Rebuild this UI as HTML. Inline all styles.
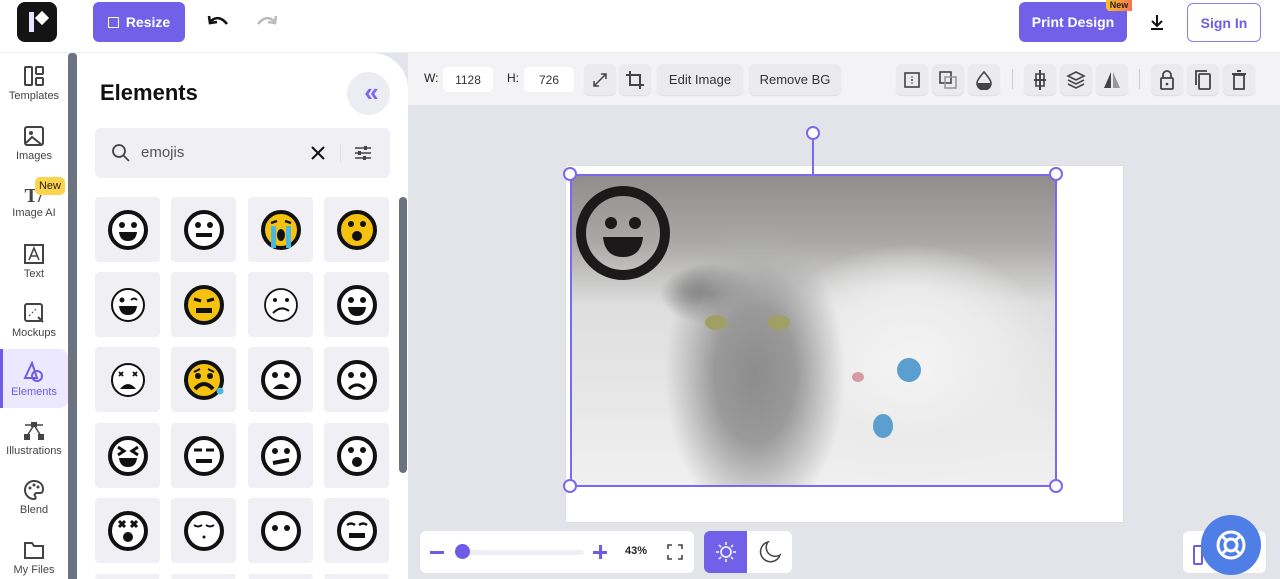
<!DOCTYPE html>
<html style="width:1280px;height:579px;overflow:hidden"><head><meta charset="utf-8">
<style>
*{box-sizing:border-box;margin:0;padding:0}
body{width:1280px;height:579px;overflow:hidden;font-family:"Liberation Sans",sans-serif;background:#e3e4e9;position:relative}
.abs{position:absolute}
.top{left:0;top:0;width:1280px;height:53px;background:#fff;border-bottom:1px solid #eceef2}
.logo{left:17px;top:2px;width:40px;height:40px;background:#141414;border-radius:8px}
.btnp{background:#7360e8;color:#fff;border-radius:6px;font-weight:bold;font-size:14px;display:flex;align-items:center;justify-content:center}
.side{left:0;top:53px;width:68px;height:526px;background:#fff}
.sb{left:68px;top:53px;width:9px;height:526px;background:#6b7280;border-radius:4px 4px 0 0}
.panel{left:77px;top:53px;width:331px;height:526px;background:#fff;border-radius:0 36px 0 0}
.nav{position:absolute;left:0;width:68px;text-align:center;font-size:11px;color:#444}
.nav svg{display:block;margin:0 auto 3px}
.cell{position:absolute;width:65px;height:65px;background:#f0f0f4;border-radius:4px;display:flex;align-items:center;justify-content:center}
.tb{left:408px;top:53px;width:872px;height:52px;background:#f3f3f6}
.tbtn{position:absolute;top:11px;height:31px;background:#ebebef;border-radius:6px;font-size:13px;color:#333;display:flex;align-items:center;justify-content:center;box-shadow:0 1px 1px #ddd}
.inp{position:absolute;top:14px;height:25px;background:#fff;border-radius:5px;font-size:12px;color:#333;display:flex;align-items:center;justify-content:center}
.h{position:absolute;width:14px;height:14px;border:2px solid #7b68ee;background:#fff;border-radius:50%}
</style></head><body>
<div class="abs top"></div>
<div class="abs logo"><div class="abs" style="left:12px;top:10px;width:5px;height:20px;background:#e8e4ff"></div><div class="abs" style="left:20px;top:11px;width:10px;height:10px;background:#fff;transform:rotate(45deg)"></div></div>
<div class="abs btnp" style="left:93px;top:2px;width:92px;height:40px"><span style="display:inline-block;width:11px;height:11px;border:1.5px solid #fff;margin-right:7px;border-radius:1px"></span>Resize</div>
<svg class="abs" style="left:207px;top:12px" width="24" height="20" viewBox="0 0 24 20"><path d="M4 9 Q12 2 20 12" stroke="#111" stroke-width="2.6" fill="none"/><path d="M2 4 L3 11 L10 10" stroke="#111" stroke-width="2.6" fill="none"/></svg>
<svg class="abs" style="left:254px;top:12px" width="24" height="20" viewBox="0 0 24 20"><path d="M20 9 Q12 2 4 12" stroke="#bbb" stroke-width="2.6" fill="none"/><path d="M22 4 L21 11 L14 10" stroke="#bbb" stroke-width="2.6" fill="none"/></svg>
<div class="abs btnp" style="left:1019px;top:2px;width:108px;height:40px">Print Design</div>
<div class="abs" style="left:1106px;top:0;width:26px;height:11px;background:linear-gradient(90deg,#fbbf24,#f97352);border-radius:0 0 0 4px;font-size:9px;font-weight:bold;text-align:center;color:#222;line-height:10px">New</div>
<svg class="abs" style="left:1149px;top:13px" width="16" height="18"><path d="M8 2v10M3 8l5 5 5-5M2 16h12" stroke="#111" stroke-width="2" fill="none"/></svg>
<div class="abs" style="left:1187px;top:3px;width:74px;height:39px;border:1.5px solid #8b7cf0;border-radius:6px;color:#6c5ce7;font-size:14px;font-weight:bold;display:flex;align-items:center;justify-content:center">Sign In</div>

<div class="abs side">
<div class="nav" style="top:12px"><svg width="22" height="22"><rect x="2" y="2" width="7" height="18" rx="1" fill="none" stroke="#444" stroke-width="2"/><rect x="13" y="2" width="7" height="7" rx="1" fill="none" stroke="#444" stroke-width="2"/><rect x="13" y="13" width="7" height="7" rx="1" fill="none" stroke="#444" stroke-width="2"/></svg>Templates</div>
<div class="nav" style="top:72px"><svg width="22" height="22"><rect x="2" y="2" width="18" height="18" rx="2" fill="none" stroke="#444" stroke-width="2"/><circle cx="8" cy="8" r="2" fill="#444"/><path d="M3 18l6-6 10 8" stroke="#444" stroke-width="2" fill="none"/></svg>Images</div>
<div class="nav" style="top:132px"><div style="font-family:'Liberation Serif';font-size:20px;font-weight:bold;color:#444;height:22px;line-height:22px">T/</div>Image AI</div>
<div class="abs" style="left:35px;top:124px;width:30px;height:18px;background:#fcd34d;border-radius:5px;font-size:11px;text-align:center;line-height:18px;color:#222">New</div>
<div class="nav" style="top:190px"><svg width="22" height="22"><rect x="2" y="2" width="18" height="18" fill="none" stroke="#444" stroke-width="2"/><path d="M6 17L11 5L16 17M8 13h6" stroke="#444" stroke-width="1.6" fill="none"/></svg>Text</div>
<div class="nav" style="top:249px"><svg width="22" height="22"><rect x="2" y="2" width="17" height="17" rx="2" fill="none" stroke="#444" stroke-width="2"/><path d="M6 14L14 6" stroke="#444" stroke-dasharray="2 2"/><path d="M15 15l5 5" stroke="#444" stroke-width="2"/></svg>Mockups</div>
<div class="abs" style="left:0;top:296px;width:68px;height:59px;background:#ebe8ff;border-radius:0 8px 8px 0;border-left:3px solid #6c5ce7"></div>
<div class="nav" style="top:308px;color:#6c5ce7"><svg width="22" height="22"><path d="M9 2L2 17h12z" fill="none" stroke="#6c5ce7" stroke-width="2"/><circle cx="14" cy="15" r="5" fill="none" stroke="#6c5ce7" stroke-width="2"/></svg>Elements</div>
<div class="nav" style="top:367px"><svg width="26" height="22"><path d="M4 5h18M13 5L6 16M13 5l7 11" stroke="#444" stroke-width="1.5" fill="none"/><rect x="10" y="2" width="6" height="5" fill="#444"/><rect x="3" y="14" width="6" height="6" fill="#444"/><rect x="17" y="14" width="6" height="6" fill="#444"/></svg>Illustrations</div>
<div class="nav" style="top:426px"><svg width="22" height="22"><path d="M11 2a9 9 0 1 0 0 18c2 0 2-2 1-3s0-3 2-3h3c2 0 3-1 3-4 0-5-4-8-9-8z" fill="none" stroke="#444" stroke-width="2"/><circle cx="7" cy="9" r="1.5" fill="#444"/><circle cx="11" cy="6" r="1.5" fill="#444"/><circle cx="15" cy="8" r="1.5" fill="#444"/></svg>Blend</div>
<div class="nav" style="top:486px"><svg width="22" height="22"><path d="M2 4h7l2 3h9v12H2z" fill="none" stroke="#444" stroke-width="2"/></svg>My Files</div>
</div>
<div class="abs sb"></div>
<div class="abs" style="left:408px;top:53px;width:40px;height:52px;background:#f3f3f6"></div>
<div class="abs panel"></div>
<div class="abs" style="left:100px;top:80px;font-size:22px;font-weight:bold;color:#111">Elements</div>
<div class="abs" style="left:347px;top:72px;width:43px;height:43px;border-radius:50%;background:#ececf3;color:#7b68ee;font-size:26px;font-weight:bold;text-align:center;line-height:40px;letter-spacing:-6px">«</div>
<div class="abs" style="left:95px;top:128px;width:295px;height:50px;background:#f0f0f4;border-radius:6px"></div>
<svg class="abs" style="left:111px;top:143px" width="20" height="20"><circle cx="8" cy="8" r="6" fill="none" stroke="#444" stroke-width="1.8"/><path d="M12.5 12.5L18 18" stroke="#444" stroke-width="1.8"/></svg>
<div class="abs" style="left:141px;top:144px;font-size:15px;color:#555">emojis</div>
<svg class="abs" style="left:310px;top:145px" width="16" height="16"><path d="M2 2l12 12M14 2L2 14" stroke="#111" stroke-width="2"/></svg>
<div class="abs" style="left:340px;top:144px;width:1px;height:18px;background:#ddd"></div>
<svg class="abs" style="left:354px;top:144px" width="18" height="18"><path d="M1 4h16M1 9h16M1 14h16" stroke="#444" stroke-width="1.6"/><rect x="10" y="2" width="3" height="4" fill="#444"/><rect x="4" y="7" width="3" height="4" fill="#444"/><rect x="9" y="12" width="3" height="4" fill="#444"/></svg>
<div class="abs" style="left:399px;top:197px;width:8px;height:276px;background:#6b7280;border-radius:4px"></div>

<div class="cell" style="left:95px;top:197px"><svg width="44" height="44"><circle cx="22" cy="22" r="18" fill="#fff" stroke="#111" stroke-width="4"/><circle cx="16" cy="17" r="3" fill="#111"/><circle cx="28" cy="17" r="3" fill="#111"/><path d="M13 24h18q-1 9-9 9t-9-9z" fill="#111"/></svg></div>
<div class="cell" style="left:171px;top:197px"><svg width="44" height="44"><circle cx="22" cy="22" r="18" fill="#fff" stroke="#111" stroke-width="4"/><circle cx="16" cy="17" r="3" fill="#111"/><circle cx="28" cy="17" r="3" fill="#111"/><rect x="14" y="25" width="16" height="4" fill="#111"/></svg></div>
<div class="cell" style="left:248px;top:197px"><svg width="44" height="44"><circle cx="22" cy="22" r="18" fill="#f5c20f" stroke="#111" stroke-width="4"/><rect x="12" y="18" width="5" height="22" fill="#48b8e0"/><rect x="27" y="18" width="5" height="22" fill="#48b8e0"/><ellipse cx="22" cy="27" rx="4" ry="6" fill="#111"/><path d="M12 15l6-2M32 15l-6-2" stroke="#111" stroke-width="2.5"/></svg></div>
<div class="cell" style="left:324px;top:197px"><svg width="44" height="44"><circle cx="22" cy="22" r="18" fill="#f5c20f" stroke="#111" stroke-width="4"/><circle cx="16" cy="16" r="3" fill="#111"/><circle cx="28" cy="16" r="3" fill="#111"/><circle cx="22" cy="28" r="5" fill="#111"/></svg></div>

<div class="cell" style="left:95px;top:272px"><svg width="44" height="44"><circle cx="22" cy="22" r="16" fill="#fff" stroke="#111" stroke-width="2"/><circle cx="16" cy="17" r="2.5" fill="#111"/><path d="M25 17q3-3 6 0" stroke="#111" stroke-width="2" fill="none"/><path d="M13 23h18q-1 9-9 9t-9-9z" fill="#111"/></svg></div>
<div class="cell" style="left:171px;top:272px"><svg width="44" height="44"><circle cx="22" cy="22" r="18" fill="#f5c20f" stroke="#111" stroke-width="4"/><path d="M12 16l7 2M32 16l-7 2" stroke="#111" stroke-width="3"/><rect x="14" y="25" width="16" height="5" fill="#111"/></svg></div>
<div class="cell" style="left:248px;top:272px"><svg width="44" height="44"><circle cx="22" cy="22" r="16" fill="#fff" stroke="#111" stroke-width="1.8"/><circle cx="16" cy="17" r="2" fill="#111"/><circle cx="28" cy="17" r="2" fill="#111"/><path d="M14 30q8-8 16-2" stroke="#111" stroke-width="2" fill="none"/></svg></div>
<div class="cell" style="left:324px;top:272px"><svg width="44" height="44"><circle cx="22" cy="22" r="18" fill="#fff" stroke="#111" stroke-width="4"/><circle cx="16" cy="17" r="3" fill="#111"/><circle cx="28" cy="17" r="3" fill="#111"/><path d="M13 24h18q-1 9-9 9t-9-9z" fill="#111"/></svg></div>

<div class="cell" style="left:95px;top:347px"><svg width="44" height="44"><circle cx="22" cy="22" r="16" fill="#fff" stroke="#111" stroke-width="2"/><path d="M13 14l4 4M17 14l-4 4M27 14l4 4M31 14l-4 4" stroke="#111" stroke-width="1.8"/><path d="M14 31q8-10 16 0z" fill="#111"/></svg></div>
<div class="cell" style="left:171px;top:347px"><svg width="44" height="44"><circle cx="22" cy="22" r="18" fill="#f5c20f" stroke="#111" stroke-width="4"/><circle cx="16" cy="18" r="3" fill="#111"/><circle cx="28" cy="18" r="3" fill="#111"/><path d="M13 31q9-10 18 0" stroke="#111" stroke-width="4" fill="none"/><path d="M12 14l6-3M32 14l-6-3" stroke="#111" stroke-width="2"/><circle cx="38" cy="33" r="3.5" fill="#48b8e0"/></svg></div>
<div class="cell" style="left:248px;top:347px"><svg width="44" height="44"><circle cx="22" cy="22" r="18" fill="#fff" stroke="#111" stroke-width="4"/><circle cx="16" cy="17" r="3" fill="#111"/><circle cx="28" cy="17" r="3" fill="#111"/><path d="M14 31q8-10 16 0z" fill="#111"/></svg></div>
<div class="cell" style="left:324px;top:347px"><svg width="44" height="44"><circle cx="22" cy="22" r="18" fill="#fff" stroke="#111" stroke-width="4"/><circle cx="16" cy="17" r="3" fill="#111"/><circle cx="28" cy="17" r="3" fill="#111"/><path d="M14 31q8-8 16 0" stroke="#111" stroke-width="3" fill="none"/></svg></div>

<div class="cell" style="left:95px;top:423px"><svg width="44" height="44"><circle cx="22" cy="22" r="18" fill="#fff" stroke="#111" stroke-width="4"/><path d="M12 13l6 4-6 4M32 13l-6 4 6 4" stroke="#111" stroke-width="3" fill="none"/><path d="M13 24h18q-1 9-9 9t-9-9z" fill="#111"/></svg></div>
<div class="cell" style="left:171px;top:423px"><svg width="44" height="44"><circle cx="22" cy="22" r="18" fill="#fff" stroke="#111" stroke-width="4"/><path d="M12 16h8M24 16h8" stroke="#111" stroke-width="3"/><rect x="14" y="25" width="16" height="4" fill="#111"/></svg></div>
<div class="cell" style="left:248px;top:423px"><svg width="44" height="44"><circle cx="22" cy="22" r="18" fill="#fff" stroke="#111" stroke-width="4"/><circle cx="16" cy="17" r="3" fill="#111"/><circle cx="28" cy="17" r="3" fill="#111"/><path d="M14 29l16-3" stroke="#111" stroke-width="4"/></svg></div>
<div class="cell" style="left:324px;top:423px"><svg width="44" height="44"><circle cx="22" cy="22" r="18" fill="#fff" stroke="#111" stroke-width="4"/><circle cx="16" cy="16" r="3" fill="#111"/><circle cx="28" cy="16" r="3" fill="#111"/><circle cx="22" cy="28" r="5" fill="#111"/></svg></div>

<div class="cell" style="left:95px;top:498px"><svg width="44" height="44"><circle cx="22" cy="22" r="18" fill="#fff" stroke="#111" stroke-width="4"/><path d="M13 12l6 6M19 12l-6 6M25 12l6 6M31 12l-6 6" stroke="#111" stroke-width="3"/><circle cx="22" cy="28" r="5" fill="#111"/></svg></div>
<div class="cell" style="left:171px;top:498px"><svg width="44" height="44"><circle cx="22" cy="22" r="18" fill="#fff" stroke="#111" stroke-width="4"/><path d="M12 16q4 3 8 0M24 16q4 3 8 0" stroke="#111" stroke-width="2" fill="none"/><circle cx="22" cy="28" r="1.5" fill="#111"/></svg></div>
<div class="cell" style="left:248px;top:498px"><svg width="44" height="44"><circle cx="22" cy="22" r="18" fill="#fff" stroke="#111" stroke-width="4"/><circle cx="16" cy="19" r="3" fill="#111"/><circle cx="28" cy="19" r="3" fill="#111"/></svg></div>
<div class="cell" style="left:324px;top:498px"><svg width="44" height="44"><circle cx="22" cy="22" r="18" fill="#fff" stroke="#111" stroke-width="4"/><path d="M12 16q4-3 8 0M24 16q4-3 8 0" stroke="#111" stroke-width="2.5" fill="none"/><rect x="14" y="24" width="16" height="5" fill="#111"/></svg></div>
<div class="cell" style="left:95px;top:574px;height:5px"></div><div class="cell" style="left:171px;top:574px;height:5px"></div><div class="cell" style="left:248px;top:574px;height:5px"></div><div class="cell" style="left:324px;top:574px;height:5px"></div>

<div class="abs tb" style="left:409px">
<div class="abs" style="left:15px;top:18px;font-size:12px;color:#222">W:</div>
<div class="inp" style="left:34px;width:50px">1128</div>
<div class="abs" style="left:98px;top:18px;font-size:12px;color:#222">H:</div>
<div class="inp" style="left:115px;width:50px">726</div>
<div class="tbtn" style="left:175px;width:32px"><svg width="18" height="18"><path d="M3 15l12-12M10 3h5v5M3 10v5h5" stroke="#444" stroke-width="1.5" fill="none"/></svg></div>
<div class="tbtn" style="left:210px;width:32px"><svg width="20" height="20"><path d="M5 1v14h14M1 5h14v14" stroke="#444" stroke-width="2" fill="none"/></svg></div>
<div class="tbtn" style="left:248px;width:86px">Edit Image</div>
<div class="tbtn" style="left:340px;width:92px">Remove BG</div>
<div class="tbtn" style="left:487px;width:32px"><svg width="18" height="18"><rect x="2" y="2" width="14" height="14" fill="none" stroke="#444" stroke-width="1.6"/><circle cx="9" cy="9" r="1" fill="#444"/><circle cx="9" cy="6" r=".8" fill="#444"/><circle cx="9" cy="12" r=".8" fill="#444"/></svg></div>
<div class="tbtn" style="left:523px;width:32px"><svg width="20" height="20"><rect x="2" y="2" width="11" height="11" fill="none" stroke="#444" stroke-width="1.6"/><rect x="7" y="7" width="11" height="11" fill="none" stroke="#999" stroke-width="1.6"/></svg></div>
<div class="tbtn" style="left:559px;width:32px"><svg width="18" height="20"><path d="M9 2Q2 10 2 13a7 7 0 0 0 14 0Q16 10 9 2z" fill="none" stroke="#444" stroke-width="1.6"/><path d="M2.5 13h13a6.5 6.5 0 0 1-13 0z" fill="#444"/></svg></div>
<div class="abs" style="left:603px;top:16px;width:1px;height:20px;background:#ccc"></div>
<div class="tbtn" style="left:615px;width:32px"><svg width="20" height="22"><path d="M10 1v20M4 11h12" stroke="#444" stroke-width="2"/><rect x="6" y="5" width="8" height="12" fill="none" stroke="#444" stroke-width="1.6"/></svg></div>
<div class="tbtn" style="left:651px;width:32px"><svg width="20" height="20"><path d="M10 2l8 4-8 4-8-4zM2 10l8 4 8-4M2 14l8 4 8-4" stroke="#444" stroke-width="1.6" fill="none"/></svg></div>
<div class="tbtn" style="left:687px;width:32px"><svg width="20" height="18"><path d="M9 1v16H2z" fill="#444"/><path d="M11 1v16h7z" fill="#999"/></svg></div>
<div class="abs" style="left:730px;top:16px;width:1px;height:20px;background:#ccc"></div>
<div class="tbtn" style="left:742px;width:32px"><svg width="18" height="22"><rect x="3" y="9" width="12" height="11" rx="1" fill="none" stroke="#444" stroke-width="1.8"/><path d="M5 9V6a4 4 0 0 1 8 0v3" fill="none" stroke="#444" stroke-width="1.8"/><circle cx="9" cy="15" r="1.3" fill="#444"/></svg></div>
<div class="tbtn" style="left:778px;width:32px"><svg width="20" height="22"><rect x="6" y="5" width="11" height="15" rx="1" fill="none" stroke="#444" stroke-width="1.8"/><path d="M3 16V2h11" fill="none" stroke="#444" stroke-width="1.8"/></svg></div>
<div class="tbtn" style="left:814px;width:32px"><svg width="18" height="22"><path d="M2 5h14M7 2h4" stroke="#444" stroke-width="2"/><rect x="4" y="6" width="10" height="14" fill="none" stroke="#444" stroke-width="1.8"/></svg></div>
</div>

<div class="abs" style="left:565px;top:165px;width:559px;height:358px;background:#fff;border:1px solid #ddd"></div>
<div class="abs" style="left:570px;top:174px;width:487px;height:313px;background:
radial-gradient(ellipse 90px 150px at 185px 200px,#8c8c8c 0,#9a9a9a 45%,rgba(175,175,175,0.6) 75%,transparent 100%),
radial-gradient(ellipse 50px 30px at 140px 120px,#555 0,transparent 100%),
radial-gradient(ellipse 150px 120px at 340px 190px,#f4f4f4 0,#ebebeb 60%,transparent 100%),
linear-gradient(180deg,#8e8d8b 0,#aaa9a7 22%,#dedede 42%,#f0f0f0 100%)"></div>
<div class="abs" style="left:705px;top:315px;width:22px;height:15px;border-radius:50%;background:#a0a064"></div>
<div class="abs" style="left:768px;top:315px;width:22px;height:15px;border-radius:50%;background:#a0a064"></div>
<div class="abs" style="left:897px;top:358px;width:24px;height:24px;border-radius:50%;background:#5b9ed0"></div>
<div class="abs" style="left:873px;top:414px;width:20px;height:24px;border-radius:50%;background:#5b9ed0"></div>
<div class="abs" style="left:852px;top:372px;width:12px;height:10px;border-radius:50%;background:#d49aa5"></div>
<svg class="abs" style="left:575px;top:185px" width="96" height="96"><circle cx="48" cy="48" r="42" fill="none" stroke="#1b1919" stroke-width="10"/><circle cx="36" cy="38" r="6" fill="#1b1919"/><circle cx="60" cy="38" r="6" fill="#1b1919"/><path d="M28 52h40q-2 20-20 20t-20-20z" fill="#1b1919"/></svg>
<div class="abs" style="left:570px;top:174px;width:487px;height:313px;border:2px solid #7b68ee"></div>
<div class="abs" style="left:812px;top:140px;width:2px;height:34px;background:#7b68ee"></div>
<div class="h" style="left:806px;top:126px"></div>
<div class="h" style="left:563px;top:167px"></div><div class="h" style="left:1049px;top:167px"></div>
<div class="h" style="left:563px;top:479px"></div><div class="h" style="left:1049px;top:479px"></div>

<div class="abs" style="left:420px;top:531px;width:274px;height:42px;background:#fff;border-radius:6px"></div>
<div class="abs" style="left:430px;top:551px;width:14px;height:3px;background:#6c5ce7"></div>
<div class="abs" style="left:462px;top:550px;width:122px;height:5px;background:#eeeef4;border-radius:3px"></div>
<div class="abs" style="left:455px;top:544px;width:15px;height:15px;border-radius:50%;background:#6c5ce7"></div>
<div class="abs" style="left:593px;top:551px;width:14px;height:3px;background:#6c5ce7"></div>
<div class="abs" style="left:598.5px;top:545px;width:3px;height:14px;background:#6c5ce7"></div>
<div class="abs" style="left:625px;top:545px;font-size:11px;font-weight:bold;color:#222">43%</div>
<svg class="abs" style="left:667px;top:544px" width="16" height="16"><path d="M1 5V1h4M11 1h4v4M15 11v4h-4M5 15H1v-4" stroke="#444" stroke-width="1.6" fill="none"/></svg>
<div class="abs" style="left:704px;top:531px;width:88px;height:42px;background:#fff;border-radius:6px;overflow:hidden"><div style="width:43px;height:42px;background:#7360e8"></div></div>
<svg class="abs" style="left:714px;top:540px" width="24" height="24"><circle cx="12" cy="12" r="5" fill="none" stroke="#fff" stroke-width="1.5"/><path d="M12 2v3M12 19v3M2 12h3M19 12h3M5 5l2 2M17 17l2 2M5 19l2-2M17 7l2-2" stroke="#fff" stroke-width="1.5"/></svg>
<svg class="abs" style="left:758px;top:540px" width="24" height="24"><path d="M10 2a10 10 0 1 0 12 13A9 9 0 0 1 10 2z" fill="none" stroke="#444" stroke-width="1.5"/></svg>
<div class="abs" style="left:1183px;top:531px;width:83px;height:42px;background:#fff;border-radius:6px"></div>
<div class="abs" style="left:1193px;top:545px;width:10px;height:20px;border:2px solid #6c5ce7;border-radius:2px"></div>
<div class="abs" style="left:1201px;top:515px;width:60px;height:60px;border-radius:50%;background:#4f7fe6"></div>
<svg class="abs" style="left:1213px;top:527px" width="36" height="36"><circle cx="18" cy="18" r="13" fill="none" stroke="#fff" stroke-width="3"/><circle cx="18" cy="18" r="6" fill="none" stroke="#fff" stroke-width="3"/><path d="M9 9l5 5M27 9l-5 5M9 27l5-5M27 27l-5-5" stroke="#fff" stroke-width="3"/></svg>
</body></html>
